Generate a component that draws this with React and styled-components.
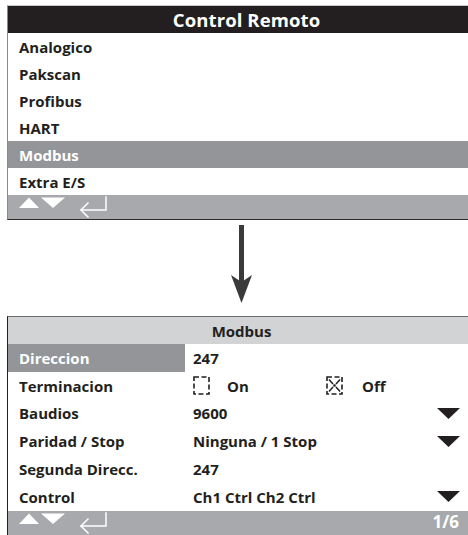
import React from "react";
import styled, { createGlobalStyle } from "styled-components";

const Global = createGlobalStyle`
  html, body { margin: 0; padding: 0; background: #fff; overflow: hidden; }
  body { font-family: "Open Sans", "Liberation Sans", sans-serif; color: #231f20; }
`;

const Page = styled.div`
  width: 468px;
  height: 535px;
  padding-top: 5px;
  box-sizing: border-box;
  display: flex;
  flex-direction: column;
`;

const Panel = styled.div`
  margin-left: 7px;
  width: ${(p) => p.$width}px;
  box-sizing: border-box;
  border-top: 1px solid ${(p) => p.$topLine};
  border-left: 1px solid ${(p) => p.$sideLine};
  border-bottom: ${(p) => (p.$bottomLine ? `1px solid ${p.$bottomLine}` : "none")};
  display: flex;
  flex-direction: column;
  flex-shrink: 0;
`;

const Header = styled.div`
  height: 27px;
  display: flex;
  align-items: center;
  justify-content: center;
  background: ${(p) => (p.$dark ? "#231f20" : "#d1d3d4")};
  color: ${(p) => (p.$dark ? "#ffffff" : "#231f20")};
  font-weight: 700;
  font-size: ${(p) => (p.$dark ? "18.5px" : "15px")};
  letter-spacing: ${(p) => (p.$dark ? "0.1px" : "0")};
`;

const MenuRow = styled.div`
  height: 27px;
  display: flex;
  align-items: center;
  padding-left: 11px;
  font-weight: 700;
  font-size: 15px;
  background: ${(p) => (p.$active ? "#939598" : "transparent")};
  color: ${(p) => (p.$active ? "#ffffff" : "#231f20")};
`;

const Footer = styled.div`
  height: ${(p) => p.$h}px;
  background: #a7a9ac;
  display: flex;
  align-items: ${(p) => (p.$top ? "flex-start" : "center")};
  justify-content: space-between;
  padding-right: 16px;
`;

const PageNum = styled.span`
  color: #ffffff;
  font-weight: 700;
  font-size: 17px;
  line-height: 20px;
  margin-top: 1px;
`;

const ArrowZone = styled.div`
  height: 96px;
  flex-shrink: 0;
  padding-left: 230px;
  padding-top: 4px;
  box-sizing: border-box;
`;

const Grid = styled.div`
  display: grid;
  grid-template-columns: 177px 1fr;
  grid-auto-rows: 27.8px;
`;

const Label = styled.div`
  display: flex;
  align-items: center;
  padding-left: 11px;
  font-weight: 700;
  font-size: 15px;
  background: ${(p) => (p.$active ? "#939598" : "transparent")};
  color: ${(p) => (p.$active ? "#ffffff" : "#231f20")};
`;

const Value = styled.div`
  display: flex;
  align-items: center;
  justify-content: space-between;
  padding-left: 8px;
  padding-right: 15px;
  font-weight: 700;
  font-size: 15px;
`;

const Options = styled.div`
  display: flex;
  align-items: center;
`;

const Option = styled.div`
  display: flex;
  align-items: center;
  gap: ${(p) => p.$gap}px;
  width: ${(p) => p.$w}px;
`;

const NavIcons = () => (
  <svg width="110" height="24" viewBox="0 0 110 24" style={{ marginLeft: 0 }}>
    <polygon points="11,13 31,13 21,2.5" fill="#fff" />
    <polygon points="33,2.5 57,2.5 45,13" fill="#fff" />
    <g stroke="#fff" strokeWidth="1.5" fill="none" strokeLinecap="square">
      <polyline points="98,2 98,15 73,15" />
      <polyline points="80,8 73,15 80,22" />
    </g>
  </svg>
);

const DownArrow = () => (
  <svg width="24" height="82" viewBox="0 0 24 82">
    <rect x="9" y="1" width="5" height="58" fill="#3a3a3a" />
    <polygon points="1,51 11.5,58 22,51 11.5,79" fill="#3a3a3a" />
  </svg>
);

const Dropdown = () => (
  <svg width="23" height="11" viewBox="0 0 23 11">
    <polygon points="0,0 23,0 11.5,11" fill="#231f20" />
  </svg>
);

const CheckBox = ({ checked }) => (
  <svg width="17" height="19" viewBox="0 0 17 19">
    <rect
      x="1"
      y="1"
      width="15"
      height="17"
      fill="none"
      stroke="#231f20"
      strokeWidth="1.6"
      strokeDasharray="5 2.5"
    />
    {checked && (
      <g stroke="#231f20" strokeWidth="1.5">
        <line x1="3" y1="3.5" x2="7" y2="8" />
        <line x1="14" y1="3.5" x2="10" y2="8" />
        <line x1="3" y1="15.5" x2="7" y2="11" />
        <line x1="14" y1="15.5" x2="10" y2="11" />
        <rect x="7.3" y="8.3" width="2.4" height="2.4" fill="#231f20" stroke="none" />
      </g>
    )}
  </svg>
);

const menuItems = ["Analogico", "Pakscan", "Profibus", "HART", "Modbus", "Extra E/S"];

const settings = [
  { label: "Direccion", value: "247", active: true },
  { label: "Terminacion", type: "check" },
  { label: "Baudios", value: "9600", dropdown: true },
  { label: "Paridad / Stop", value: "Ninguna / 1 Stop", dropdown: true },
  { label: "Segunda Direcc.", value: "247" },
  { label: "Control", value: "Ch1 Ctrl Ch2 Ctrl", dropdown: true },
];

export default function App() {
  return (
    <>
      <Global />
      <Page>
        <Panel $width={478} $topLine="#c8c8c8" $sideLine="#8a8a8a" $bottomLine="#2d2a2b">
          <Header $dark>Control Remoto</Header>
          {menuItems.map((m) => (
            <MenuRow key={m} $active={m === "Modbus"}>
              {m}
            </MenuRow>
          ))}
          <Footer $h={24}>
            <NavIcons />
          </Footer>
        </Panel>

        <ArrowZone>
          <DownArrow />
        </ArrowZone>

        <Panel $width={468} $topLine="#6d6e71" $sideLine="#231f20">
          <Header>Modbus</Header>
          <Grid>
            {settings.map((s) => (
              <React.Fragment key={s.label}>
                <Label $active={s.active}>{s.label}</Label>
                <Value>
                  {s.type === "check" ? (
                    <Options>
                      <Option $w={133} $gap={17}>
                        <CheckBox />
                        <span>On</span>
                      </Option>
                      <Option $w={80} $gap={19}>
                        <CheckBox checked />
                        <span>Off</span>
                      </Option>
                    </Options>
                  ) : (
                    <span>{s.value}</span>
                  )}
                  {s.dropdown && <Dropdown />}
                </Value>
              </React.Fragment>
            ))}
          </Grid>
          <Footer $h={30} $top>
            <NavIcons />
            <PageNum>1/6</PageNum>
          </Footer>
        </Panel>
      </Page>
    </>
  );
}
